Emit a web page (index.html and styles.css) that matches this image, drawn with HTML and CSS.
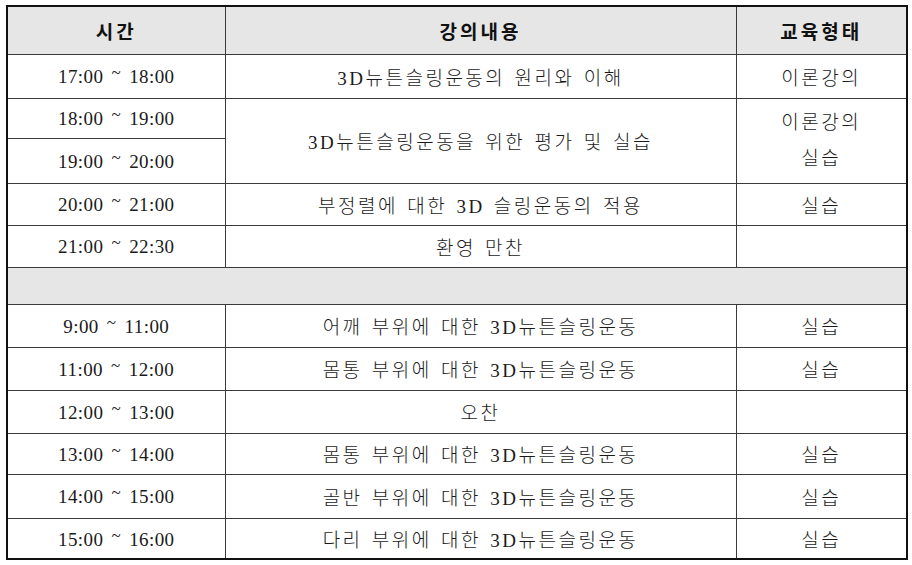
FILE: index.html
```html
<!DOCTYPE html>
<html lang="ko">
<head>
<meta charset="utf-8">
<title>강의 일정</title>
<link rel="stylesheet" href="styles.css">
</head>
<body>
<div class="page">
<table class="schedule">
  <colgroup><col class="c1"><col class="c2"><col class="c3"></colgroup>
  <thead>
    <tr class="head"><th>시간</th><th>강의내용</th><th>교육형태</th></tr>
  </thead>
  <tbody>
    <tr class="h44"><td class="time">17:00 <span class="tl">~</span> 18:00</td><td>3D뉴튼슬링운동의 원리와 이해</td><td>이론강의</td></tr>
    <tr class="h40"><td class="time">18:00 <span class="tl">~</span> 19:00</td><td rowspan="2">3D뉴튼슬링운동을 위한 평가 및 실습</td><td rowspan="2" class="two"><div>이론강의</div><div>실습</div></td></tr>
    <tr class="h45"><td class="time">19:00 <span class="tl">~</span> 20:00</td></tr>
    <tr class="h42"><td class="time">20:00 <span class="tl">~</span> 21:00</td><td>부정렬에 대한 3D 슬링운동의 적용</td><td>실습</td></tr>
    <tr class="h42"><td class="time">21:00 <span class="tl">~</span> 22:30</td><td>환영 만찬</td><td></td></tr>
    <tr class="h37 sep"><td colspan="3"></td></tr>
    <tr class="h43"><td class="time">9:00 <span class="tl">~</span> 11:00</td><td>어깨 부위에 대한 3D뉴튼슬링운동</td><td>실습</td></tr>
    <tr class="h43"><td class="time">11:00 <span class="tl">~</span> 12:00</td><td>몸통 부위에 대한 3D뉴튼슬링운동</td><td>실습</td></tr>
    <tr class="h43"><td class="time">12:00 <span class="tl">~</span> 13:00</td><td>오찬</td><td></td></tr>
    <tr class="h41"><td class="time">13:00 <span class="tl">~</span> 14:00</td><td>몸통 부위에 대한 3D뉴튼슬링운동</td><td>실습</td></tr>
    <tr class="h44"><td class="time">14:00 <span class="tl">~</span> 15:00</td><td>골반 부위에 대한 3D뉴튼슬링운동</td><td>실습</td></tr>
    <tr class="h41"><td class="time">15:00 <span class="tl">~</span> 16:00</td><td>다리 부위에 대한 3D뉴튼슬링운동</td><td>실습</td></tr>
  </tbody>
</table>
</div>
</body>
</html>
```
FILE: styles.css
```css
html, body {
  margin: 0;
  padding: 0;
  background: #ffffff;
}

.page {
  padding: 5px 0 0 6px;
}

.schedule {
  border-collapse: collapse;
  table-layout: fixed;
  width: 900px;
  border: 2px solid #111;
  font-family: "Liberation Serif", "Noto Sans CJK KR", serif;
  font-size: 19px;
  color: #1a1a1a;
}

.c1 { width: 218px; }
.c2 { width: 511px; }
.c3 { width: 171px; }

.schedule th,
.schedule td {
  border: 1px solid #3a3a3a;
  padding: 0;
  text-align: center;
  vertical-align: middle;
  letter-spacing: 2.5px;
  word-spacing: 2px;
  font-weight: 300;
}

.schedule th {
  background: #e6e6e6;
  font-family: "Noto Sans CJK KR", sans-serif;
  font-weight: 700;
  font-size: 19px;
  letter-spacing: 3px;
  color: #111;
}

.schedule td.time {
  font-size: 19px;
  letter-spacing: 0.4px;
  word-spacing: 3px;
}

.tl {
  vertical-align: 0.3em;
  font-size: 17px;
}

.two div {
  line-height: 36px;
}

.head { height: 48px; }
.h37 { height: 37px; }
.h40 { height: 40px; }
.h41 { height: 41px; }
.h42 { height: 42px; }
.h43 { height: 43px; }
.h44 { height: 44px; }
.h45 { height: 45px; }

.sep td {
  background: #e6e6e6;
}
```
